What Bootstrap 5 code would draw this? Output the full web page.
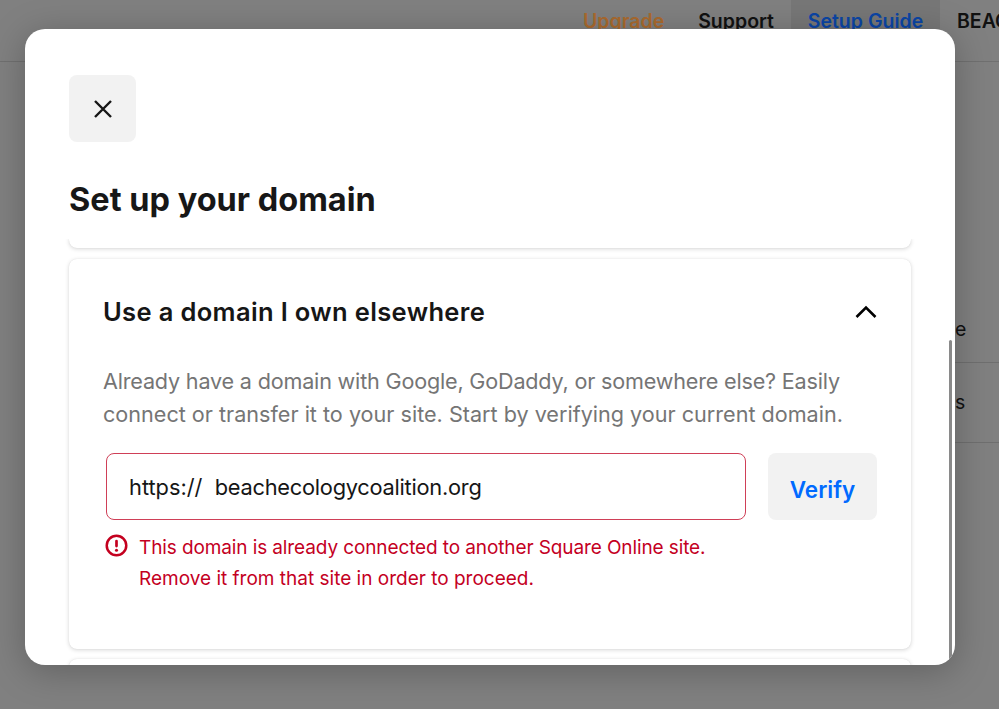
<!DOCTYPE html>
<html lang="en">
<head>
<meta charset="utf-8">
<title>Set up your domain</title>
<link href="https://cdn.jsdelivr.net/npm/bootstrap@5.3.0/dist/css/bootstrap.min.css" rel="stylesheet">
<style>
html,body{height:709px;overflow:hidden;}
body{background:#808080;font-family:Inter,"Liberation Sans",sans-serif;color:#161616;position:relative;}
.topbar{height:62px;border-bottom:1px solid #707070;padding-right:0;overflow:hidden;}
.toplink{font-size:19.5px;font-weight:600;line-height:22px;padding-top:10px;white-space:nowrap;color:#111;}
.up{color:#aa6a2e;margin-right:34px;}
.sup{margin-right:17px;}
.guide{background:#777;color:#0b45a5;width:149px;height:61px;text-align:center;}
.beac{width:59px;margin-left:0;padding-left:17px;overflow:hidden;}
.rowline{height:80px;border-bottom:1px solid #6f6f6f;width:54px;font-size:19.5px;color:#111;padding-left:10px;}
.bgrows{margin-left:945px;padding-top:0;}
.r1{height:301px;padding-top:254px;line-height:26px;}
.r2{height:80px;padding-top:26px;line-height:26px;}
.sheet{position:absolute;left:25px;top:29px;width:930px;height:636px;background:#fff;border-radius:20px;box-shadow:0 6px 36px rgba(0,0,0,.25);overflow:hidden;}
.closer{width:67px;height:67px;margin:46px 0 0 44px;background:#f2f2f2;border:0;border-radius:8px;padding:0;}
.ttl{font-size:32.5px;font-weight:700;letter-spacing:0;line-height:40px;margin:38px 0 0 44px;color:#171717;}
.scroller{margin:19px 39px 0 39px;padding:0 5px;height:426px;overflow:hidden;}
.piece{background:#fff;border-radius:8px;box-shadow:0 0 1px rgba(0,0,0,.1),0 1px 4px rgba(0,0,0,.16);}
.piece1{height:10px;border-top-left-radius:0;border-top-right-radius:0;margin-top:-1px;}
.piece2{height:390px;margin-top:11px;padding:34px 34px 0 34px;}
.piece3{height:40px;margin-top:10px;}
.phead{font-size:25.5px;font-weight:600;letter-spacing:.35px;line-height:38px;color:#161616;margin-top:0;}
.pdesc{font-size:21.6px;line-height:33px;color:#757575;margin:34px 0 0;white-space:nowrap;}
.tight1{letter-spacing:-.19px;}
.hdrow{height:38px;}
.urlbox{width:640px;height:67px;border:1px solid #cf3f57;border-radius:8px;margin-left:3px;padding-left:22px;font-size:21.8px;line-height:67px;color:#161616;white-space:pre;}
.domainpart{letter-spacing:-.25px;}
.urlrow{margin-top:22px;}
.verifybtn{width:109px;height:67px;background:#f2f2f2;color:#006aff;font-size:22.5px;font-weight:600;border:0;border-radius:8px;padding:6px 0 0;margin-left:22px;}
.errline{margin:12px 0 0 2px;color:#c4001f;font-size:19px;line-height:31px;}
.tight2{letter-spacing:-.11px;}
.errline svg{flex:none;margin:2px 11px 0 0;}
.thumb{position:absolute;right:3px;top:311px;width:3px;height:325px;background:#8a8a8a;border-radius:2px;}
</style>
</head>
<body>
<div class="topbar d-flex justify-content-end align-items-start">
  <div class="toplink up">Upgrade</div>
  <div class="toplink sup">Support</div>
  <div class="toplink guide">Setup Guide</div>
  <div class="toplink beac">BEAC</div>
</div>
<div class="bgrows">
  <div class="rowline r1">e</div>
  <div class="rowline r2">s</div>
</div>
<div class="sheet">
  <button class="closer d-flex align-items-center justify-content-center" type="button" aria-label="Close">
    <svg width="20" height="20" viewBox="0 0 20 20" fill="none" stroke="#161616" stroke-width="2.4" aria-hidden="true"><path d="M2 2 18 18M18 2 2 18"/></svg>
  </button>
  <h1 class="ttl">Set up your domain</h1>
  <div class="scroller">
    <div class="piece piece1"></div>
    <div class="piece piece2">
      <div class="hdrow d-flex justify-content-between align-items-center">
        <div class="phead">Use a domain I own elsewhere</div>
        <svg width="22" height="14" viewBox="0 0 22 14" fill="none" stroke="#000" stroke-width="2.6" aria-hidden="true"><path d="M1.5 12 11 2.5 20.5 12"/></svg>
      </div>
      <p class="pdesc"><span class="tight1">Already have a domain with Google, GoDaddy, or somewhere else? Easily</span><br>connect or transfer it to your site. Start by verifying your current domain.</p>
      <div class="d-flex urlrow">
        <div class="urlbox">https://  <span class="domainpart">beachecologycoalition.org</span></div>
        <button class="verifybtn" type="button">Verify</button>
      </div>
      <div class="errline d-flex">
        <svg width="23" height="23" viewBox="0 0 24 24" aria-hidden="true"><circle cx="12" cy="12" r="10.2" fill="none" stroke="#c4001f" stroke-width="2.6"/><rect x="10.6" y="6" width="2.8" height="8" rx="1.4" fill="#c4001f"/><circle cx="12" cy="17" r="1.6" fill="#c4001f"/></svg>
        <div><span class="tight2">This domain is already connected to another Square Online site.</span><br>Remove it from that site in order to proceed.</div>
      </div>
    </div>
    <div class="piece piece3"></div>
  </div>
  <div class="thumb"></div>
</div>
</body>
</html>
